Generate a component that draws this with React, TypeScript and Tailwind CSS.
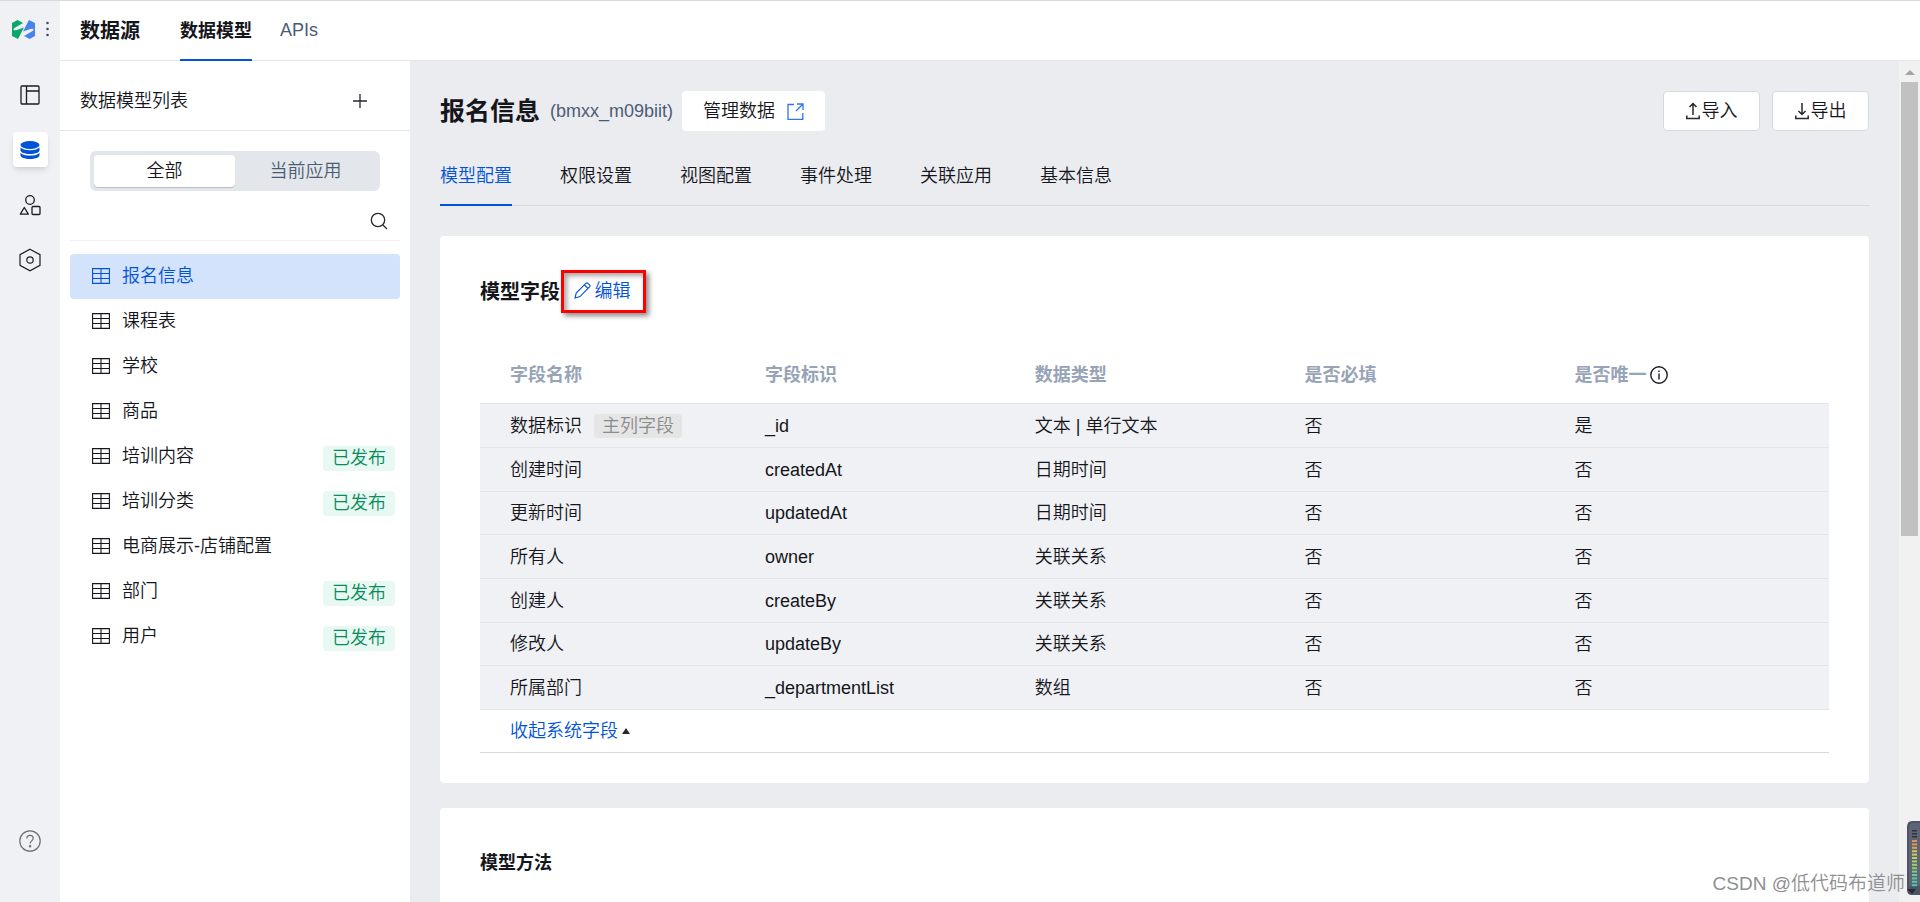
import { ReactNode } from "react";
import clsx from "clsx";

interface Model {
  name: string;
  published?: boolean;
}

interface Field {
  name: string;
  key: string;
  type: string;
  required: string;
  unique: string;
  primary?: boolean;
}

const models: Model[] = [
  { name: "报名信息" },
  { name: "课程表" },
  { name: "学校" },
  { name: "商品" },
  { name: "培训内容", published: true },
  { name: "培训分类", published: true },
  { name: "电商展示-店铺配置" },
  { name: "部门", published: true },
  { name: "用户", published: true },
];

const tabs = ["模型配置", "权限设置", "视图配置", "事件处理", "关联应用", "基本信息"];

const fields: Field[] = [
  { name: "数据标识", key: "_id", type: "文本 | 单行文本", required: "否", unique: "是", primary: true },
  { name: "创建时间", key: "createdAt", type: "日期时间", required: "否", unique: "否" },
  { name: "更新时间", key: "updatedAt", type: "日期时间", required: "否", unique: "否" },
  { name: "所有人", key: "owner", type: "关联关系", required: "否", unique: "否" },
  { name: "创建人", key: "createBy", type: "关联关系", required: "否", unique: "否" },
  { name: "修改人", key: "updateBy", type: "关联关系", required: "否", unique: "否" },
  { name: "所属部门", key: "_departmentList", type: "数组", required: "否", unique: "否" },
];

function Logo() {
  const half = "M0 3 5.5 0 11 3 2 8.3q-1 1-.3 1.700q.8.600 3 0L12 7.500 6 19 0 16z";
  return (
    <svg width="23" height="19" viewBox="0 0 23 19">
      <path d={half} fill="#0aa869" />
      <path d={half} fill="#4584f0" transform="rotate(180 11.5 9.5)" />
    </svg>
  );
}

function LayoutIcon() {
  return (
    <svg width="20" height="20" viewBox="0 0 20 20" fill="none" stroke="#1b1d22" strokeWidth="1.3">
      <rect x="1" y="1" width="18" height="18" rx="1" />
      <path d="M6.5 1v18M6.5 6H19" />
    </svg>
  );
}

function DatabaseIcon() {
  return (
    <svg width="20" height="20" viewBox="0 0 20 20" fill="#0052d9">
      <ellipse cx="10" cy="5" rx="9.5" ry="4" />
      <path d="M.5 7.3C2 9.4 5.5 10.300 10 10.300s8-.9 9.500-3v2.900c0 2.200-4.200 3.700-9.500 3.700S.5 12.400.5 10.200z" />
      <path d="M.5 12.700c1.500 2 5 2.900 9.500 2.900s8-.9 9.500-2.900v2.600c0 2.200-4.200 3.700-9.500 3.700S.5 17.500.5 15.300z" />
    </svg>
  );
}

function ShapesIcon() {
  return (
    <svg width="22" height="22" viewBox="0 0 22 22" fill="none" stroke="#1b1d22" strokeWidth="1.3">
      <circle cx="11" cy="6" r="4.3" />
      <path d="M5.300 13.500 1.300 20.200h8z" strokeLinejoin="round" />
      <rect x="13" y="12.5" width="8" height="8" rx="1" />
    </svg>
  );
}

function HexagonIcon() {
  return (
    <svg width="22" height="24" viewBox="0 0 22 24" fill="none" stroke="#1b1d22" strokeWidth="1.2">
      <path d="M11 1.300 21 6.600v10.800l-10 5.300-10-5.300V6.600z" />
      <circle cx="11" cy="12" r="3.2" />
    </svg>
  );
}

function HelpIcon() {
  return (
    <svg width="22" height="22" viewBox="0 0 22 22" fill="none" stroke="#6b6e76" strokeWidth="1.2">
      <circle cx="11" cy="11" r="10.2" />
      <path d="M7.800 8.600c0-1.900 1.300-3.200 3.200-3.200s3.200 1.200 3.200 2.900c0 2.300-3.100 2.800-3.100 5.300" />
      <circle cx="11.1" cy="16.3" r=".6" fill="#6b6e76" />
    </svg>
  );
}

function TableIcon() {
  return (
    <svg width="18" height="16" viewBox="0 0 18 16" fill="none" stroke="currentColor" strokeWidth="1.1" className="shrink-0">
      <path d="M.6.600h16.800v14.800H.6zM.6 5.500h16.800M.6 10.500h16.800M9 .6v14.800" />
    </svg>
  );
}

function TrayIcon({ up }: { up?: boolean }) {
  return (
    <svg width="14" height="18" viewBox="0 0 14 18" fill="none" stroke="#26282e" strokeWidth="1.5">
      <path d="M.8 13.500v3h12.400v-3" />
      {up ? <path d="M7 13V1.500M3.500 5 7 1.500 10.500 5" /> : <path d="M7 1v11.500M3.500 9 7 12.500 10.500 9" />}
    </svg>
  );
}

function Card({ children }: { children: ReactNode }) {
  return <section className="rounded bg-white px-10">{children}</section>;
}

function Rail() {
  return (
    <nav className="flex w-[60px] shrink-0 flex-col items-center bg-[#f0f1f5] pb-[50px]">
      <div className="flex h-14 w-full items-center gap-[11px] pl-3">
        <Logo />
        <svg width="3" height="16" viewBox="0 0 3 16" fill="#454e60">
          <circle cx="1.5" cy="2" r="1.3" />
          <circle cx="1.5" cy="8" r="1.3" />
          <circle cx="1.5" cy="14" r="1.3" />
        </svg>
      </div>
      <div className="mt-5 flex flex-col gap-5">
        <button aria-label="应用" className="grid size-[35px] place-items-center">
          <LayoutIcon />
        </button>
        <button aria-label="数据源" className="grid size-[35px] place-items-center rounded bg-white shadow-md shadow-black/10">
          <DatabaseIcon />
        </button>
        <button aria-label="组件" className="grid size-[35px] place-items-center">
          <ShapesIcon />
        </button>
        <button aria-label="设置" className="grid size-[35px] place-items-center">
          <HexagonIcon />
        </button>
      </div>
      <button aria-label="帮助" className="mt-auto">
        <HelpIcon />
      </button>
    </nav>
  );
}

function Sidebar() {
  return (
    <aside className="w-[350px] shrink-0 bg-white">
      <div className="flex h-[70px] items-center justify-between border-b border-[#e3e5ea] pt-[10px] pr-[43px] pl-5">
        <h2>数据模型列表</h2>
        <button aria-label="新建">
          <svg width="14" height="14" viewBox="0 0 14 14" stroke="#26282e" strokeWidth="1.3" className="block">
            <path d="M7 0v14M0 7h14" />
          </svg>
        </button>
      </div>
      <div className="mx-[30px] mt-5 flex h-10 rounded-md bg-[#e3e6eb] p-1">
        <button className="flex-1 rounded-sm bg-white shadow-[0_1px_0_#b5bfd0]">全部</button>
        <button className="flex-1 text-[#4b5b76]">当前应用</button>
      </div>
      <div className="mx-[10px] flex h-[50px] items-center justify-end border-b border-[#eef0f4] pt-[10px] pr-3">
        <button aria-label="搜索">
          <svg width="18" height="18" viewBox="0 0 18 18" fill="none" stroke="#26282e" strokeWidth="1.3">
            <circle cx="8" cy="8" r="6.7" />
            <path d="m13 13 4 4" />
          </svg>
        </button>
      </div>
      <ul className="mx-[10px] mt-[13px]">
        {models.map((model, i) => (
          <li key={model.name}>
            <a
              href="#"
              className={clsx(
                "flex h-[45px] items-center rounded pr-[5px] pb-px pl-[22px]",
                i === 0 && "bg-[#d4e3fc] text-[#0052d9]",
              )}
            >
              <TableIcon />
              <span className="ml-3 pb-px">{model.name}</span>
              {model.published && (
                <span className="mt-1 ml-auto h-[25px] w-[72px] rounded bg-[#e8f8f2] text-center text-[#098c5c]">
                  已发布
                </span>
              )}
            </a>
          </li>
        ))}
      </ul>
    </aside>
  );
}

function FieldTable() {
  return (
    <table className="w-full table-fixed border-collapse text-left">
      <thead>
        <tr className="h-[58px] border-b border-[#e3e5ea] text-[#97a3b7]">
          <th className="w-[255px] pt-[3px] pl-[30px]">字段名称</th>
          <th className="w-1/5 pt-[3px] pl-[30px]">字段标识</th>
          <th className="w-1/5 pt-[3px] pl-[30px]">数据类型</th>
          <th className="w-1/5 pt-[3px] pl-[30px]">是否必填</th>
          <th className="pt-[3px] pl-[30px]">
            <span className="flex items-center gap-1">
              是否唯一
              <svg width="18" height="18" viewBox="0 0 18 18" fill="none" stroke="#1b1d22" strokeWidth="1.4">
                <circle cx="9" cy="9" r="8.2" />
                <path d="M9 7.500v6M9 4.500v1.500" />
              </svg>
            </span>
          </th>
        </tr>
      </thead>
      <tbody>
        {fields.map((field) => (
          <tr key={field.key} className="h-11 border-b border-[#e3e5ea] bg-[#f0f1f5] nth-[3n]:h-[43px]">
            <td className="pt-px pl-[30px]">
              <span className="flex items-center gap-3">
                {field.name}
                {field.primary && (
                  <span className="h-6 rounded-sm bg-[#e5e5e6] px-2 text-[#8b8b8b]">主列字段</span>
                )}
              </span>
            </td>
            <td className="pt-px pl-[30px]">{field.key}</td>
            <td className="pt-px pl-[30px]">{field.type}</td>
            <td className="pt-px pl-[30px]">{field.required}</td>
            <td className="pt-px pl-[30px]">{field.unique}</td>
          </tr>
        ))}
      </tbody>
    </table>
  );
}

function ScrollBar() {
  return (
    <div className="flex w-[21px] shrink-0 flex-col items-center bg-[#f1f1f1]">
      <svg width="10" height="21" viewBox="0 0 10 21" fill="#a3a3a3">
        <path d="m5 9 5 5H0z" />
      </svg>
      <div className="h-[54%] w-[17px] bg-[#c1c1c1]" />
    </div>
  );
}

// little volume meter pinned to the right edge of the window
function LevelMeter() {
  const bars = ["#ef8b5a", "#e0954f", "#dfa64c", "#dcc14b", "#cfcb50", "#bccf58", "#b1cf5c", "#a3d062", "#90cf6e", "#7bd07f", "#66cf90", "#56cda0", "#4ecbaa", "#49cab4"];
  return (
    <svg width="13" height="75" viewBox="0 0 13 75" className="absolute right-0 bottom-[6px]">
      <path d="M13 0H5Q0 0 0 6v63q0 5 5 5h8z" fill="#4d5362" />
      <path d="M13 2H6Q2 2 2 7v58h11z" fill="#5d6475" />
      {[9, 12, 15].map((y) => (
        <rect key={y} x="5" y={y} width="5" height="1.5" fill="#30343f" />
      ))}
      {bars.map((color, i) => (
        <rect key={color} x="5" y={19 + i * 3.4} width="5" height="2" fill={color} />
      ))}
      <path d="M0 68h9l-4 5z" fill="#272a31" />
    </svg>
  );
}

export default function App() {
  return (
    <div className="relative flex h-screen overflow-hidden border-t border-[#d8d9dc] font-['Liberation_Sans','Noto_Sans_CJK_SC',sans-serif] text-[18px] leading-6 font-[350] text-[#14161b]">
      <Rail />
      <div className="flex min-w-0 flex-1 flex-col">
        <header className="flex h-[60px] shrink-0 border-b border-[#e3e5ea] bg-white pl-5">
          <h1 className="mr-10 pt-[18px] text-[20px] font-bold">数据源</h1>
          <nav className="flex gap-7">
            <a href="#" className="h-[60px] border-b-2 border-[#0052d9] pt-[18px] font-bold">
              数据模型
            </a>
            <a href="#" className="pt-[17px] text-[#4b5b76]">
              APIs
            </a>
          </nav>
        </header>
        <div className="flex min-h-0 flex-1">
          <Sidebar />
          <main className="min-w-0 flex-1 overflow-hidden bg-[#ebecf0] px-[30px] pt-[30px]">
            <div className="flex h-10 items-center">
              <h2 className="text-[25px] font-bold">报名信息</h2>
              <span className="ml-[10px] text-[#4b5b76]">(bmxx_m09biit)</span>
              <a href="#" className="ml-[9px] flex h-10 w-[143px] items-center justify-center gap-3 rounded bg-white">
                管理数据
                <svg width="17" height="17" viewBox="0 0 17 17" fill="none" stroke="#2f74ea" strokeWidth="1.3">
                  <path d="M7 1.500H1v14.800h14.800V10M10 1h6v6M16 1 9 8" />
                </svg>
              </a>
              <div className="ml-auto flex gap-3">
                <button className="flex h-10 w-[97px] items-center justify-center gap-[2px] rounded border border-[#d5dae2] bg-white">
                  <TrayIcon up />
                  导入
                </button>
                <button className="flex h-10 w-[97px] items-center justify-center gap-[2px] rounded border border-[#d5dae2] bg-white">
                  <TrayIcon />
                  导出
                </button>
              </div>
            </div>
            <nav className="mt-8 flex h-[43px] gap-12 border-b border-[#d5d8df]">
              {tabs.map((tab, i) => (
                <a
                  key={tab}
                  href="#"
                  className={clsx("h-[43px] shrink-0 pt-px", i === 0 && "border-b-2 border-[#0052d9] text-[#0052d9]")}
                >
                  {tab}
                </a>
              ))}
            </nav>
            <div className="mt-[30px] flex flex-col gap-[25px]">
              <Card>
                <div className="flex items-center pt-[34px]">
                  <h3 className="text-[20px] font-bold">模型字段</h3>
                  <button className="ml-px flex h-[43px] w-[85px] items-center justify-center gap-1 border-[3px] border-[#fe0000] pr-[3px] pb-[2px] text-[#0052d9] shadow-[3px_3px_5px_rgba(0,0,0,0.45),inset_3px_3px_5px_rgba(0,0,0,0.35)]">
                    <svg width="17" height="17" viewBox="0 0 17 17" fill="none" stroke="currentColor" strokeWidth="1.1">
                      <path d="m1 16 1.200-5L12 1.200q1-.7 2 .2l1.500 1.500q1 1 0 2L6 14.600zM10.500 3l3.700 3.700" />
                    </svg>
                    编辑
                  </button>
                </div>
                <div className="mt-8 pb-[30px]">
                  <FieldTable />
                  <div className="flex h-[43px] items-center border-b border-[#d5d8df] pl-[30px]">
                    <button className="flex items-center gap-1 text-[#0052d9]">
                      收起系统字段
                      <svg width="8" height="6" viewBox="0 0 8 6" fill="#26282e">
                        <path d="m4 0 4 6H0z" />
                      </svg>
                    </button>
                  </div>
                </div>
              </Card>
              <Card>
                <h3 className="h-[200px] pt-[43px] font-bold">模型方法</h3>
              </Card>
            </div>
          </main>
          <ScrollBar />
        </div>
      </div>
      <LevelMeter />
      <p className="absolute right-[15px] bottom-[6px] text-[19px] text-[#8f8f92]">CSDN @低代码布道师</p>
    </div>
  );
}
